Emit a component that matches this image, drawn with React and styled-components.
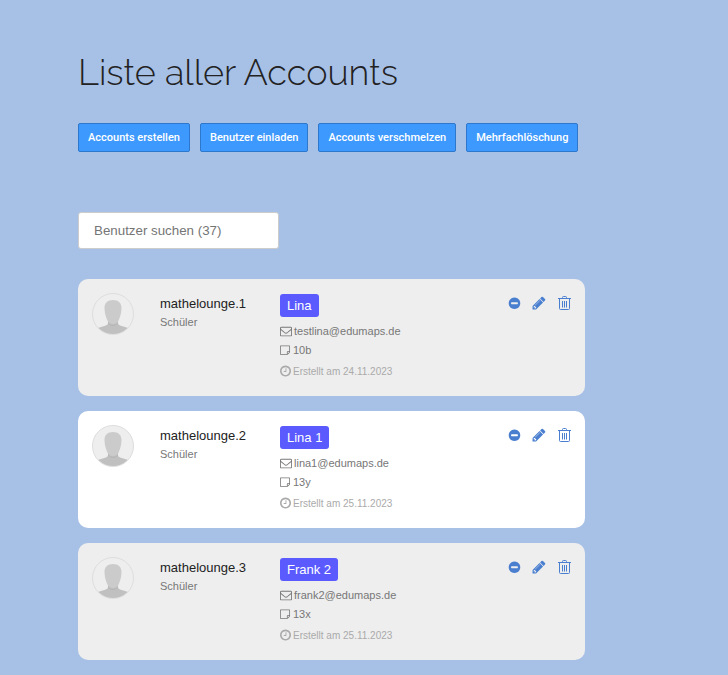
import React from 'react';
import styled, { createGlobalStyle } from 'styled-components';

const GlobalStyle = createGlobalStyle`
  * {
    box-sizing: border-box;
  }

  body {
    margin: 0;
    background: #a7c0e6;
    color: #222;
    font-family: "Liberation Sans", Arial, sans-serif;
  }
`;

const Page = styled.main`
  max-width: 663px;
  padding: 50px 78px 14px;
  margin-right: auto;
`;

const Title = styled.h1`
  margin: 0 0 29px;
  font-family: Raleway, Lato, sans-serif;
  font-size: 36px;
  font-weight: 300;
  line-height: 44px;
`;

const Toolbar = styled.div`
  display: flex;
  gap: 10px;
  margin-bottom: 60px;
`;

const ToolbarButton = styled.button`
  flex: none;
  height: 29px;
  padding: 0 9px;
  border: 1px solid #2d77cc;
  border-radius: 2px;
  background: #3d99fd;
  color: #fff;
  font-family: Roboto, "Liberation Sans", sans-serif;
  font-size: 11px;
  font-weight: 500;
  white-space: nowrap;
  cursor: pointer;
`;

const SearchInput = styled.input`
  display: block;
  width: 201px;
  height: 37px;
  margin-bottom: 30px;
  padding: 0 15px;
  border: 1px solid #ccc;
  border-radius: 3px;
  background: #fff;
  color: #444;
  font-family: inherit;

  &::placeholder {
    color: #757575;
  }
`;

const AccountList = styled.ul`
  display: flex;
  flex-direction: column;
  gap: 15px;
  margin: 0;
  padding: 0;
  list-style: none;
`;

const Card = styled.li`
  display: grid;
  grid-template-columns: 42px 94px 1fr auto;
  column-gap: 26px;
  padding: 14px 14px 13px;
  border-radius: 10px;
  background: ${({ $shaded }) => ($shaded ? '#eee' : '#fff')};
`;

const AvatarImage = styled.svg`
  display: block;
  width: 42px;
  height: 42px;
`;

const UserName = styled.div`
  padding-top: 2px;
  font-size: 13px;
  line-height: 18px;
`;

const Role = styled.div`
  color: #777;
  font-size: 11px;
  line-height: 18px;
`;

const Details = styled.div`
  display: flex;
  flex-direction: column;
  align-items: flex-start;
`;

const Badge = styled.span`
  margin: 1px 0 5px;
  padding: 0 7px;
  border-radius: 3px;
  background: #5a5aff;
  color: #fff;
  font-size: 13px;
  line-height: 23px;
`;

const DetailLine = styled.div`
  display: flex;
  align-items: center;
  gap: 2px;
  color: #777;
  font-size: 11px;
  line-height: 19px;
`;

const CreatedLine = styled(DetailLine)`
  color: #aaa;
  font-size: 10px;
  line-height: 23px;
`;

const Actions = styled.div`
  display: flex;
  align-items: flex-start;
  gap: 11px;
  padding-top: 3px;
`;

const IconButton = styled.button`
  display: flex;
  padding: 0;
  border: 0;
  background: none;
  color: #4a7fd0;
  cursor: pointer;
`;

const Glyph = styled.svg`
  display: block;
  flex: none;
  width: ${({ $size }) => $size}px;
  height: ${({ $size }) => $size}px;
  fill: currentColor;
`;

const icons = {
  minus: {
    viewBox: '-96 -64 1856 1856',
    path: 'M1344 960v-128q0-26-19-45t-45-19h-768q-26 0-45 19t-19 45v128q0 26 19 45t45 19h768q26 0 45-19t19-45zm320-64q0 209-103 385.5t-279.5 279.5-385.5 103-385.5-103-279.5-279.5-103-385.5 103-385.5 279.5-279.5 385.5-103 385.5 103 279.5 279.5 103 385.5z',
  },
  pencil: {
    viewBox: '64 64 1664 1664',
    path: 'M491 1536l91-91-235-235-91 91v107h128v128h107zm523-928q0-22-22-22-10 0-17 7l-542 542q-7 7-7 17 0 22 22 22 10 0 17-7l542-542q7-7 7-17zm-54-192l416 416-832 832h-416v-416zm683 96q0 53-37 90l-166 166-416-416 166-165q36-38 90-38 53 0 91 38l235 234q37 39 37 91z',
  },
  envelope: {
    viewBox: '0 128 1792 1792',
    path: 'M1664 1504v-768q-32 36-69 66-268 206-426 338-51 43-83 67t-86.5 48.5-102.5 24.5h-2q-48 0-102.5-24.5t-86.5-48.5-83-67q-158-132-426-338-37-30-69-66v768q0 13 9.5 22.5t22.5 9.5h1472q13 0 22.5-9.5t9.5-22.5zm0-1051v-24.5l-.5-13-3-12.5-5.5-9-9-7.5-14-2.5h-1472q-13 0-22.5 9.5t-9.5 22.5q0 168 147 284 193 152 401 317 6 5 35 29.5t46 37.5 44.5 31.5 50.5 27.5 43 9h2q20 0 43-9t50.5-27.5 44.5-31.5 46-37.5 35-29.5q208-165 401-317 54-43 100.5-115.5t46.5-131.5zm128-37v1088q0 66-47 113t-113 47h-1472q-66 0-113-47t-47-113v-1088q0-66 47-113t113-47h1472q66 0 113 47t47 113z',
  },
  note: {
    viewBox: '0 64 1792 1792',
    path: 'M96 128h1440q96 0 96 96v992q0 60-40 100l-308 308q-40 40-100 40h-1088q-96 0-96-96v-1344q0-96 96-96zm32 128v1280h992v-352q0-96 96-96h288v-832zm1120 960v280l280-280z',
  },
  clock: {
    viewBox: '128 192 1536 1536',
    path: 'M1024 544v448q0 14-9 23t-23 9h-320q-14 0-23-9t-9-23v-64q0-14 9-23t23-9h224v-352q0-14 9-23t23-9h64q14 0 23 9t9 23zm416 352q0-148-73-273t-198-198-273-73-273 73-198 198-73 273 73 273 198 198 273 73 273-73 198-198 73-273zm224 0q0 209-103 385.5t-279.5 279.5-385.5 103-385.5-103-279.5-279.5-103-385.5 103-385.5 279.5-279.5 385.5-103 385.5 103 279.5 279.5 103 385.5z',
  },
};

function Icon({ name, size }) {
  return (
    <Glyph $size={size} viewBox={icons[name].viewBox} overflow="visible" aria-hidden="true">
      <path fillRule="evenodd" d={icons[name].path} />
    </Glyph>
  );
}

function TrashIcon() {
  return (
    <Glyph $size={14} viewBox="-1 0 14 14" aria-hidden="true">
      <g fill="none" stroke="currentColor">
        <path d="M0 2.500h13M4.500 2.500v-1q0-1 1-1h2q1 0 1 1v1" />
        <path d="M1.500 3v9.500q0 1 1 1h8q1 0 1-1V3" />
        <path d="M4.500 5v6.500M6.500 5v6.500M8.500 5v6.500" />
      </g>
    </Glyph>
  );
}

function Avatar({ id }) {
  const clipId = `avatar-${id}`;
  return (
    <AvatarImage viewBox="0 0 42 42" aria-hidden="true">
      <clipPath id={clipId}>
        <circle cx="21" cy="21" r="20" />
      </clipPath>
      <circle cx="21" cy="21" r="20.5" fill="#eee" stroke="#ddd" />
      <g clipPath={`url(#${clipId})`}>
        <path
          fill="#c0c0c0"
          d="M16 28v2c0 2-2 2.500-4.500 3.200C8 34.200 5 35 3 37v6h36v-6c-2-2-5-2.800-8.500-3.800C28 32.500 26 32 26 30v-2z"
        />
        <path
          fill="#b5b5b5"
          d="M16 28c1 3 3 4 5 4s4-1 5-4v2c-1 2-3 3-5 3s-4-1-5-3z"
        />
        <path
          fill="#cbcbcb"
          d="M21 7c5.500 0 8.500 3 8.500 8 0 4-1 8-2.500 11.500C26 29.500 24 31 21 31s-5-1.500-6-4.500C13.500 23 12.500 19 12.500 15c0-5 3-8 8.500-8z"
        />
      </g>
    </AvatarImage>
  );
}

function AccountCard({ account, shaded }) {
  return (
    <Card $shaded={shaded}>
      <Avatar id={account.id} />
      <div>
        <UserName>{account.login}</UserName>
        <Role>Schüler</Role>
      </div>
      <Details>
        <Badge>{account.name}</Badge>
        <DetailLine>
          <Icon name="envelope" size={12} />
          {account.email}
        </DetailLine>
        <DetailLine>
          <Icon name="note" size={11} />
          {account.group}
        </DetailLine>
        <CreatedLine>
          <Icon name="clock" size={11} />
          {`Erstellt am ${account.created}`}
        </CreatedLine>
      </Details>
      <Actions>
        <IconButton type="button" aria-label="Sperren">
          <Icon name="minus" size={14} />
        </IconButton>
        <IconButton type="button" aria-label="Bearbeiten">
          <Icon name="pencil" size={14} />
        </IconButton>
        <IconButton type="button" aria-label="Löschen">
          <TrashIcon />
        </IconButton>
      </Actions>
    </Card>
  );
}

const toolbarItems = [
  'Accounts erstellen',
  'Benutzer einladen',
  'Accounts verschmelzen',
  'Mehrfachlöschung',
];

const accounts = [
  {
    id: 1,
    login: 'mathelounge.1',
    name: 'Lina',
    email: 'testlina@edumaps.de',
    group: '10b',
    created: '24.11.2023',
  },
  {
    id: 2,
    login: 'mathelounge.2',
    name: 'Lina 1',
    email: 'lina1@edumaps.de',
    group: '13y',
    created: '25.11.2023',
  },
  {
    id: 3,
    login: 'mathelounge.3',
    name: 'Frank 2',
    email: 'frank2@edumaps.de',
    group: '13x',
    created: '25.11.2023',
  },
];

export default function App() {
  return (
    <>
      <GlobalStyle />
      <Page>
        <Title>Liste aller Accounts</Title>
        <Toolbar>
          {toolbarItems.map((item) => (
            <ToolbarButton key={item} type="button">
              {item}
            </ToolbarButton>
          ))}
        </Toolbar>
        <SearchInput
          type="search"
          aria-label="Benutzer suchen"
          placeholder="Benutzer suchen (37)"
        />
        <AccountList>
          {accounts.map((account, index) => (
            <AccountCard key={account.id} account={account} shaded={index % 2 === 0} />
          ))}
        </AccountList>
      </Page>
    </>
  );
}
